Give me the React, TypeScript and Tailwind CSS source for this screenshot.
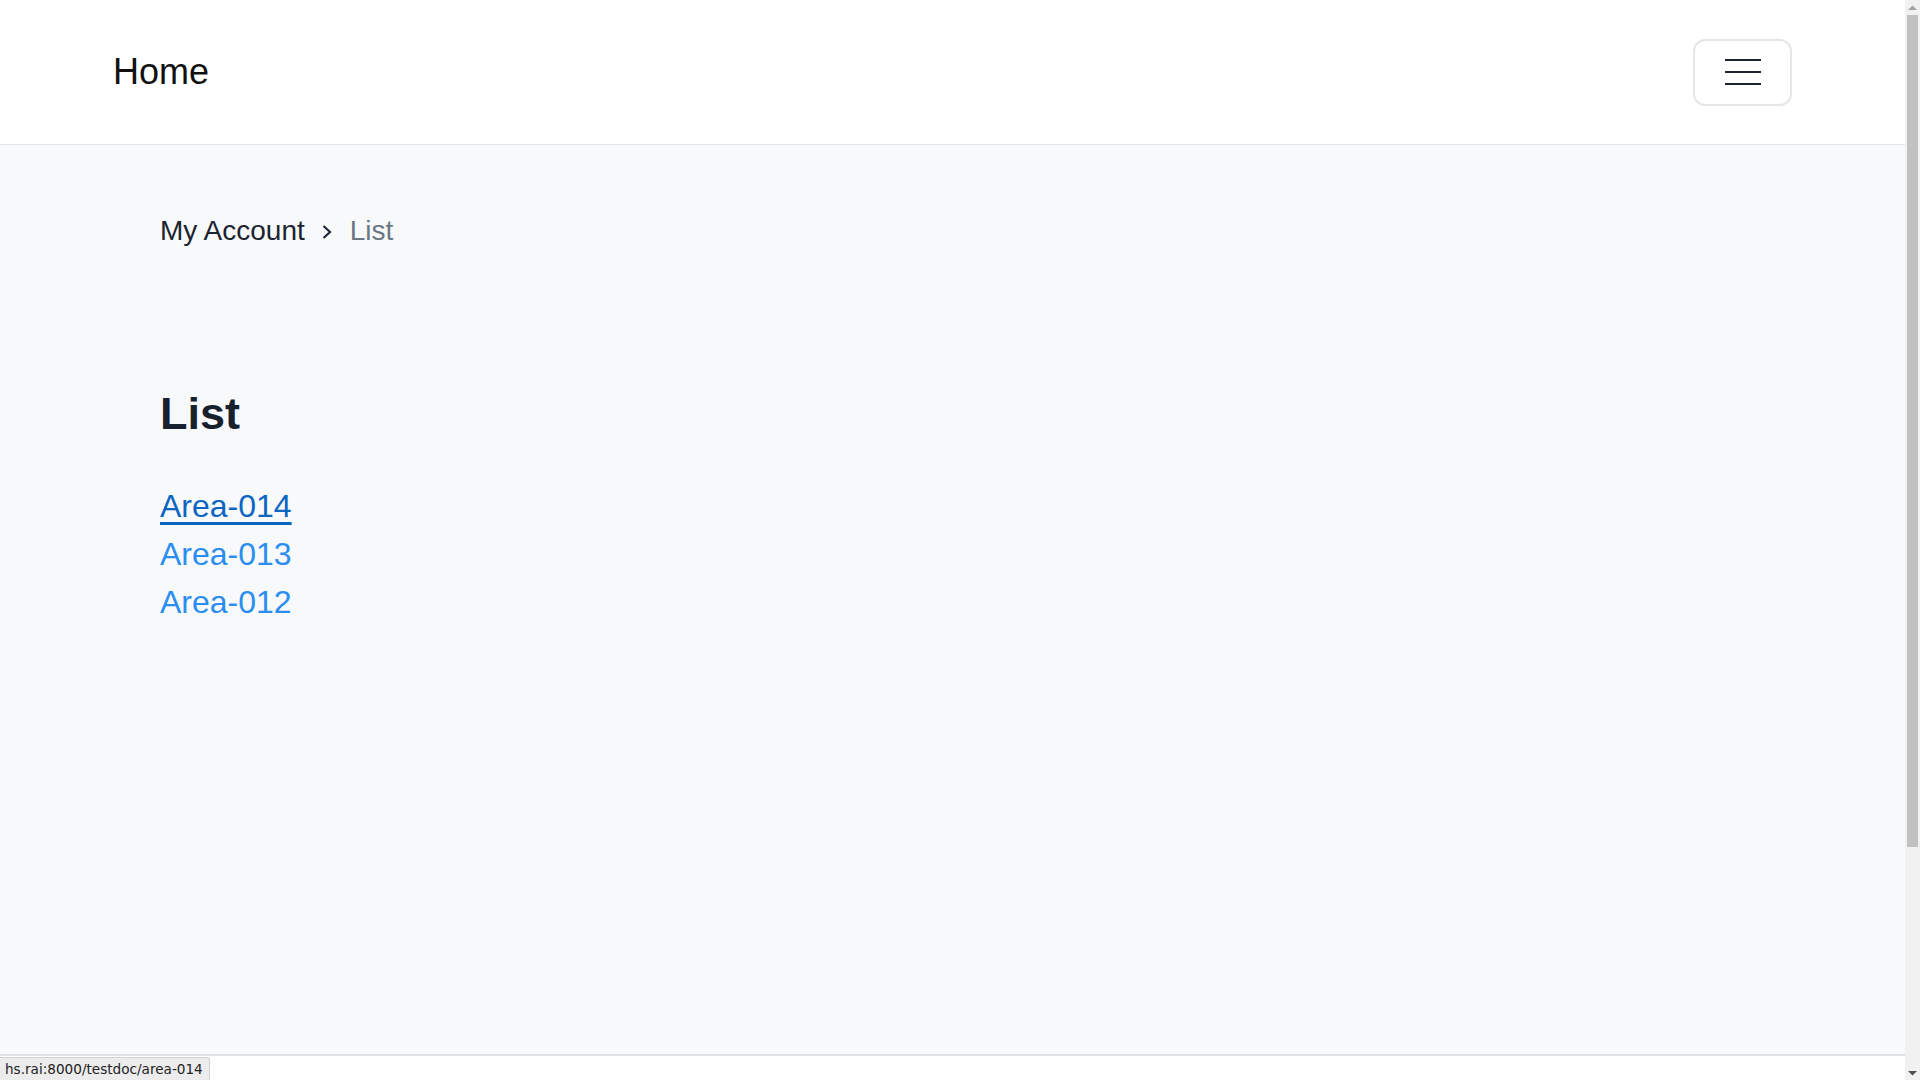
import React from 'react';

const areas = ['Area-014', 'Area-013', 'Area-012'];

function Chevron() {
    return (
        <svg width="10" height="16" viewBox="0 0 10 16" className="ml-[17px] mr-[18px] mt-[2px]">
            <path d="M1.5 2 L8 8 L1.5 14" fill="none" stroke="#1f2937" strokeWidth="2.2" />
        </svg>
    );
}

function Scrollbar() {
    return (
        <div className="w-[15px] shrink-0 bg-[#f1f1f1] flex flex-col items-center">
            <div className="h-[15px] flex items-center justify-center">
                <svg width="9" height="6" viewBox="0 0 9 6"><path d="M0 5 L4.5 0.5 L9 5 Z" fill="#a3a3a3" /></svg>
            </div>
            <div className="w-[11px] h-[832px] bg-[#c1c1c1]" />
            <div className="flex-1" />
            <div className="h-[15px] flex items-center justify-center">
                <svg width="9" height="6" viewBox="0 0 9 6"><path d="M0 1 L4.5 5.5 L9 1 Z" fill="#505050" /></svg>
            </div>
        </div>
    );
}

export default function App() {
    return (
        <div className="h-screen flex overflow-hidden bg-white text-[#1b2430]" style={{ fontFamily: '"Liberation Sans", Arial, sans-serif' }}>
            <div className="flex-1 overflow-hidden">
                <header className="h-[145px] bg-white border-b border-[#e1e4e8] flex items-center justify-between px-[113px]">
                    <a className="text-[36px] leading-none text-[#111]">Home</a>
                    <button className="w-[99px] h-[67px] rounded-[12px] border-2 border-[#e6e6e6] flex flex-col items-center justify-center gap-[10px]">
                        <span className="block w-[36px] h-[2px] bg-[#1b2430]" />
                        <span className="block w-[36px] h-[2px] bg-[#1b2430]" />
                        <span className="block w-[36px] h-[2px] bg-[#1b2430]" />
                    </button>
                </header>

                <main className="bg-[#f8f9fa] h-[909px] pl-[160px] pt-[66px]">
                    <nav className="flex items-center text-[28px] leading-[40px]">
                        <a className="text-[#1b2430]">My Account</a>
                        <Chevron />
                        <span className="text-[#6c7784]">List</span>
                    </nav>

                    <h1 className="mt-[133px] text-[45px] leading-[60px] font-bold text-[#17212d]">List</h1>

                    <ul className="mt-[38px] text-[32px] leading-[48px]">
                        {areas.map((a, i) => (
                            <li key={a}>
                                <a className={i === 0 ? 'text-[#0b66c3] underline decoration-[3px] underline-offset-[5px]' : 'text-[#2a8ef0]'}>{a}</a>
                            </li>
                        ))}
                    </ul>
                </main>

                <footer className="h-[290px] bg-white border-t-2 border-[#dfe1e5]" />
            </div>

            <Scrollbar />

            <div
                className="fixed left-0 bottom-0 h-[23px] pl-[5px] pr-[6px] flex items-center bg-[#ececec] border-t border-r border-[#d2d2d2] rounded-tr-[3px] text-[13.6px] text-[#222]"
                style={{ fontFamily: '"DejaVu Sans", sans-serif' }}
            >
                hs.rai:8000/testdoc/area-014
            </div>
        </div>
    );
}
